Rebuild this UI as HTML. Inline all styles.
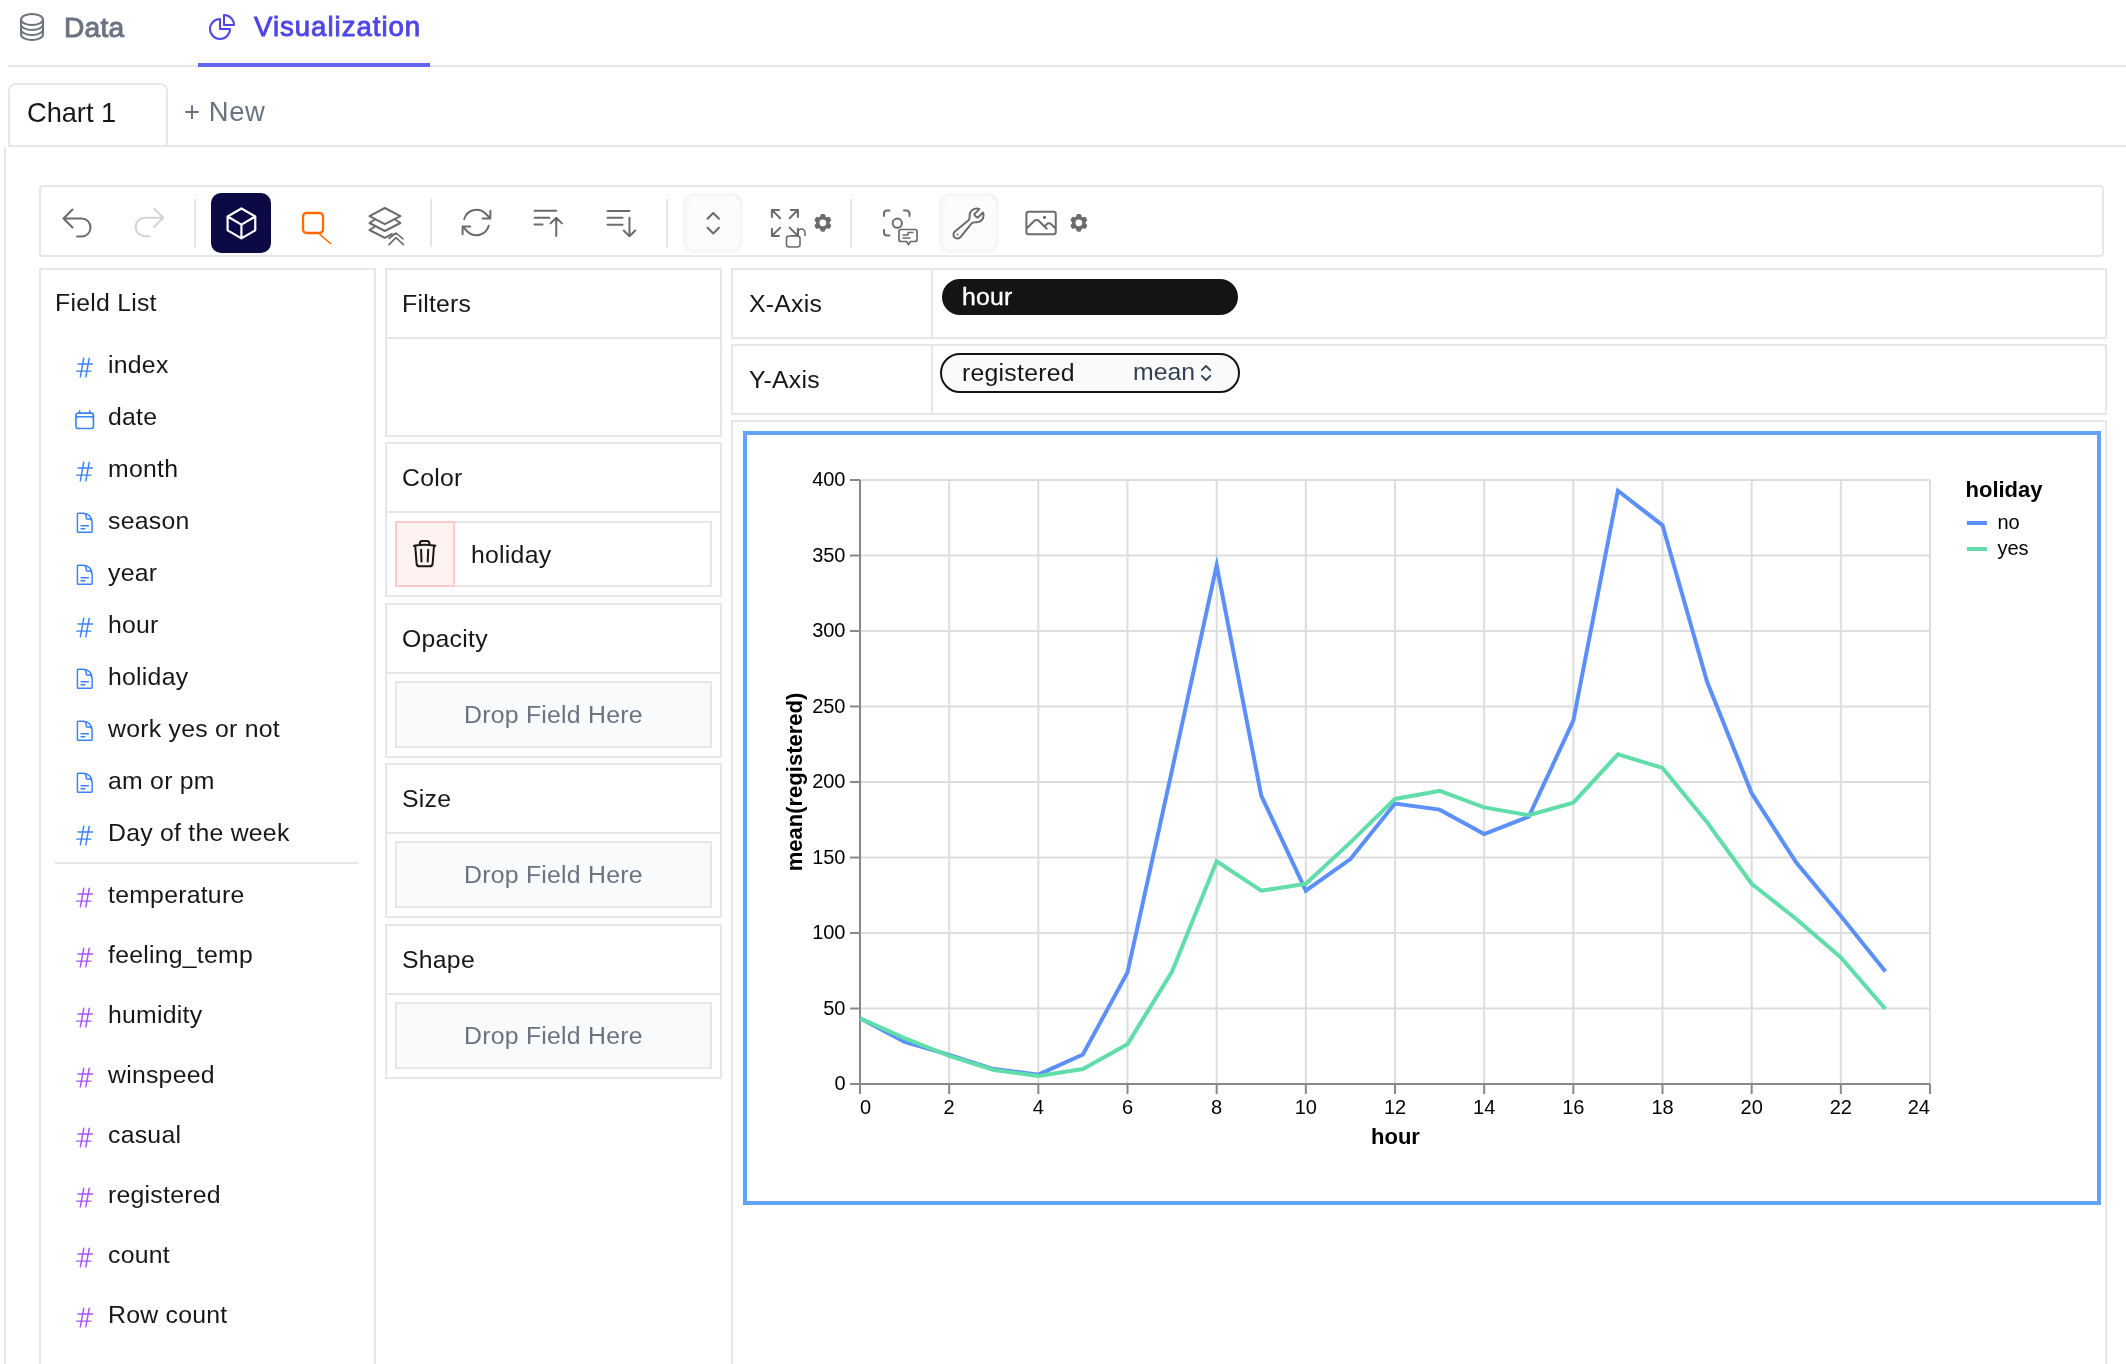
<!DOCTYPE html><html><head><meta charset="utf-8"><style>
html,body{margin:0;padding:0;background:#fff;}
#root{position:relative;width:2126px;height:1364px;overflow:hidden;background:#fff;font-family:"Liberation Sans", sans-serif;}
.t{position:absolute;white-space:nowrap;line-height:1;will-change:transform;}
.b{position:absolute;box-sizing:border-box;}
</style></head><body><div id="root">
<div class="b" style="left:8px;top:65px;width:2118px;height:2px;background:#e5e7eb;"></div>
<div class="b" style="left:198px;top:63px;width:232px;height:4px;background:#6366f1;"></div>
<svg class="b" style="left:16.00px;top:11.00px;" width="32.00" height="32.00" viewBox="0 0 24 24" fill="none" stroke="#6b7280" stroke-width="1.500" stroke-linecap="round" stroke-linejoin="round"><path d="M20.25 6.375c0 2.278-3.694 4.125-8.25 4.125S3.75 8.653 3.75 6.375m16.5 0c0-2.278-3.694-4.125-8.25-4.125S3.75 4.097 3.75 6.375m16.5 0v11.25c0 2.278-3.694 4.125-8.25 4.125s-8.25-1.847-8.25-4.125V6.375m16.5 0v3.75m-16.5-3.75v3.75m16.5 0v3.75C20.25 16.153 16.556 18 12 18s-8.25-1.847-8.25-4.125v-3.75m16.5 0c0 2.278-3.694 4.125-8.25 4.125s-8.25-1.847-8.25-4.125"/></svg>
<div class="t" style="left:64.0px;top:12.7px;font-size:28.2px;color:#6b7280;font-weight:normal;-webkit-text-stroke:0.95px #6b7280;letter-spacing:0.25px;">Data</div>
<svg class="b" style="left:205.95px;top:10.95px;" width="32.00" height="32.00" viewBox="0 0 24 24" fill="none" stroke="#4f46e5" stroke-width="1.500" stroke-linecap="round" stroke-linejoin="round"><path d="M10.5 6a7.5 7.5 0 107.5 7.5h-7.5V6z"/><path d="M13.5 10.5H21A7.5 7.5 0 0013.5 3v7.5z"/></svg>
<div class="t" style="left:254.0px;top:13.2px;font-size:27.6px;color:#4f46e5;font-weight:normal;-webkit-text-stroke:0.9px #4f46e5;letter-spacing:0.98px;">Visualization</div>
<div class="b" style="left:8px;top:145px;width:2118px;height:2px;background:#e5e7eb;"></div>
<div class="b" style="left:8px;top:83px;width:160px;height:64px;border:2px solid #e5e7eb;border-bottom:none;border-radius:8px 8px 0 0;"></div>
<div class="t" style="left:26.5px;top:99.4px;font-size:27.2px;color:#171717;font-weight:normal;">Chart 1</div>
<div class="t" style="left:184.0px;top:97.6px;font-size:27.4px;color:#6b7280;font-weight:normal;letter-spacing:0.6px;">+ New</div>
<div class="b" style="left:4px;top:147px;width:2px;height:1217px;background:#e5e7eb;"></div>
<div class="b" style="left:39px;top:185px;width:2065px;height:72px;border:2px solid #e5e7eb;border-radius:4px;"></div>
<div class="b" style="left:194px;top:199px;width:2px;height:48px;background:#e5e5e5;"></div>
<div class="b" style="left:430px;top:199px;width:2px;height:48px;background:#e5e5e5;"></div>
<div class="b" style="left:666px;top:199px;width:2px;height:48px;background:#e5e5e5;"></div>
<div class="b" style="left:850px;top:199px;width:2px;height:48px;background:#e5e5e5;"></div>
<div class="b" style="left:211px;top:193px;width:60px;height:60px;background:#0b0a45;border-radius:10px;"></div>
<div class="b" style="left:683px;top:193px;width:60px;height:60px;background:#fcfcfc;border-radius:12px;box-shadow:inset 0 0 7px rgba(0,0,0,0.07);"></div>
<div class="b" style="left:939px;top:193px;width:60px;height:60px;background:#fcfcfc;border-radius:12px;box-shadow:inset 0 0 7px rgba(0,0,0,0.07);"></div>
<svg class="b" style="left:58.67px;top:204.82px;" width="36.07" height="36.07" viewBox="0 0 24 24" fill="none" stroke="#6b6b6b" stroke-width="1.331" stroke-linecap="round" stroke-linejoin="round"><path d="M9 15L3 9m0 0l6-6M3 9h12a6 6 0 010 12h-3"/></svg>
<svg class="b" style="left:130.57px;top:204.42px;" width="36.87" height="36.87" viewBox="0 0 24 24" fill="none" stroke="#d4d4d4" stroke-width="1.302" stroke-linecap="round" stroke-linejoin="round"><path d="M15 15l6-6m0 0l-6-6m6 6H9a6 6 0 000 12h3"/></svg>
<svg class="b" style="left:222.56px;top:204.56px;" width="36.87" height="36.87" viewBox="0 0 24 24" fill="none" stroke="#fff" stroke-width="1.432" stroke-linecap="round" stroke-linejoin="round"><path d="M21 7.5l-9-5.25L3 7.5m18 0l-9 5.25m9-5.25v9l-9 5.25M3 7.5l9 5.25M3 7.5v9l9 5.25m0-9v9"/></svg>
<svg class="b" style="left:290px;top:200px" width="50" height="50" viewBox="290 200 50 50" fill="none" stroke="#ff6a00" stroke-linecap="round"><rect x="303" y="213" width="20" height="20" rx="3.5" stroke-width="2.3"/><path d="M320 234.5L330.5 243.5" stroke-width="1.6"/></svg>
<svg class="b" style="left:360px;top:200px" width="50" height="50" viewBox="360 200 50 50" fill="none" stroke="#6b6b6b" stroke-width="2" stroke-linejoin="round" stroke-linecap="round"><path d="M369.5 216.2L384.8 208L400.4 216.2L384.8 224.2Z"/><path d="M375 219.5L369.5 223L384.8 231L400.4 223L395 219.5"/><path d="M375 226.5L369.5 230L384.8 237.8L392 234"/><path d="M389 238.5L396 233L403 238.8M389 244.6L396 237.6L403.5 244.6" stroke-width="1.6"/></svg>
<svg class="b" style="left:458.42px;top:204.02px;" width="36.95" height="36.95" viewBox="0 0 24 24" fill="none" stroke="#6b6b6b" stroke-width="1.299" stroke-linecap="round" stroke-linejoin="round"><path d="M16.023 9.348h4.992v-.001M2.985 19.644v-4.992m0 0h4.992m-4.993 0l3.181 3.183a8.25 8.25 0 0013.803-3.7M4.031 9.865a8.25 8.25 0 0113.803-3.7l3.181 3.182m0-4.991v4.99"/></svg>
<svg class="b" style="left:530.49px;top:204.10px;" width="36.52" height="36.52" viewBox="0 0 24 24" fill="none" stroke="#6b6b6b" stroke-width="1.315" stroke-linecap="round" stroke-linejoin="round"><path d="M3 4.5h14.25M3 9h9.75M3 13.5h5.25m5.25-.75L17.25 9m0 0L21 12.75M17.25 9v12"/></svg>
<svg class="b" style="left:602.58px;top:203.92px;" width="36.85" height="36.85" viewBox="0 0 24 24" fill="none" stroke="#6b6b6b" stroke-width="1.303" stroke-linecap="round" stroke-linejoin="round"><path d="M3 4.5h14.25M3 9h9.75M3 13.5h9.75m4.5-4.5v12m0 0l-3.75-3.75M17.25 21L21 17.25"/></svg>
<svg class="b" style="left:694.60px;top:204.75px;" width="36.50" height="36.50" viewBox="0 0 24 24" fill="none" stroke="#6b6b6b" stroke-width="1.315" stroke-linecap="round" stroke-linejoin="round"><path d="M8.25 15L12 18.75 15.75 15m-7.5-6L12 5.25 15.75 9"/></svg>
<svg class="b" style="left:766.09px;top:204.09px;" width="37.82" height="37.82" viewBox="0 0 24 24" fill="none" stroke="#6b6b6b" stroke-width="1.269" stroke-linecap="round" stroke-linejoin="round"><path d="M3.75 3.75v4.5m0-4.5h4.5m-4.5 0L9 9M3.75 20.25v-4.5m0 4.5h4.5m-4.5 0L9 15M20.25 3.75h-4.5m4.5 0v4.5m0-4.5L15 9m5.25 11.25h-4.5m4.5 0v-4.5m0 4.5L15 15"/></svg>
<svg class="b" style="left:780px;top:222px" width="30" height="30" viewBox="780 222 30 30" fill="none" stroke="#6b6b6b" stroke-width="1.6" stroke-linecap="round"><rect x="786.5" y="236" width="13.5" height="11" rx="2.5" fill="#fff"/><path d="M798 236v-3.5a3.5 3.5 0 017 0v3"/></svg>
<svg class="b" style="left:812.16px;top:211.91px;" width="21.69" height="21.69" viewBox="0 0 24 24" fill="#6b6b6b" stroke="none" stroke-width="0.000" stroke-linecap="round" stroke-linejoin="round"><path fill-rule="evenodd" d="M11.078 2.25c-.917 0-1.699.663-1.85 1.567L9.05 4.889c-.02.12-.115.26-.297.348a7.493 7.493 0 00-.986.57c-.166.115-.334.126-.45.083L6.3 5.508a1.875 1.875 0 00-2.282.819l-.922 1.597a1.875 1.875 0 00.432 2.385l.84.692c.095.078.17.229.154.43a7.598 7.598 0 000 1.139c.015.2-.059.352-.153.43l-.841.692a1.875 1.875 0 00-.432 2.385l.922 1.597a1.875 1.875 0 002.282.818l1.019-.382c.115-.043.283-.031.45.082.312.214.641.405.985.57.182.088.277.228.297.35l.178 1.071c.151.904.933 1.567 1.85 1.567h1.844c.916 0 1.699-.663 1.85-1.567l.178-1.072c.02-.12.114-.26.297-.349.344-.165.673-.356.985-.57.167-.114.335-.125.45-.082l1.02.382a1.875 1.875 0 002.28-.819l.923-1.597a1.875 1.875 0 00-.432-2.385l-.84-.692c-.095-.078-.17-.229-.154-.43a7.614 7.614 0 000-1.139c-.016-.2.059-.352.153-.43l.84-.692c.708-.582.891-1.59.433-2.385l-.922-1.597a1.875 1.875 0 00-2.282-.818l-1.02.382c-.114.043-.282.031-.449-.083a7.49 7.49 0 00-.985-.57c-.183-.087-.277-.227-.297-.348l-.179-1.072a1.875 1.875 0 00-1.85-1.567h-1.843zM12 15.75a3.75 3.75 0 100-7.5 3.75 3.75 0 000 7.5z" clip-rule="evenodd"/></svg>
<svg class="b" style="left:875px;top:200px" width="50" height="50" viewBox="875 200 50 50" fill="none" stroke="#6b6b6b" stroke-width="2" stroke-linecap="round" stroke-linejoin="round"><path d="M884 216v-2.5a3 3 0 013-3h2.5M904 210.5h2.5a3 3 0 013 3v2.5M884 230v2.5a3 3 0 003 3h2.5"/><circle cx="897.3" cy="223.2" r="4.6"/><path d="M901 229.5h14a2 2 0 012 2v8a2 2 0 01-2 2h-4.5l-2 3-2-3H901a2 2 0 01-2-2v-8a2 2 0 012-2z" fill="#fff" stroke-width="1.7"/><path d="M903 235h5v-2.5h5M903 238h7" stroke-width="1.5"/></svg>
<svg class="b" style="left:950.01px;top:204.50px;" width="37.03" height="37.03" viewBox="0 0 24 24" fill="none" stroke="#6b6b6b" stroke-width="1.296" stroke-linecap="round" stroke-linejoin="round"><path d="M21.75 6.75a4.5 4.5 0 01-4.884 4.484c-1.076-.091-2.264.071-2.95.904l-7.152 8.684a2.548 2.548 0 11-3.586-3.586l8.684-7.152c.833-.686.995-1.874.904-2.95a4.5 4.5 0 016.336-4.486l-3.276 3.276a3.004 3.004 0 002.25 2.25l3.276-3.276c.256.565.398 1.192.398 1.852z"/><path d="M4.867 19.125h.008v.008h-.008v-.008z"/></svg>
<svg class="b" style="left:1022.67px;top:204.67px;" width="36.15" height="36.15" viewBox="0 0 24 24" fill="none" stroke="#6b6b6b" stroke-width="1.328" stroke-linecap="round" stroke-linejoin="round"><path d="M2.25 15.75l5.159-5.159a2.25 2.25 0 013.182 0l5.159 5.159m-1.5-1.5l1.409-1.409a2.25 2.25 0 013.182 0l2.909 2.909m-18 3.75h16.5a1.5 1.5 0 001.5-1.5V6a1.5 1.5 0 00-1.5-1.5H3.75A1.5 1.5 0 002.25 6v12a1.5 1.5 0 001.5 1.5zm10.5-11.25h.008v.008h-.008V8.25zm.375 0a.375.375 0 11-.75 0 .375.375 0 01.75 0z"/></svg>
<svg class="b" style="left:1067.66px;top:211.91px;" width="21.69" height="21.69" viewBox="0 0 24 24" fill="#6b6b6b" stroke="none" stroke-width="0.000" stroke-linecap="round" stroke-linejoin="round"><path fill-rule="evenodd" d="M11.078 2.25c-.917 0-1.699.663-1.85 1.567L9.05 4.889c-.02.12-.115.26-.297.348a7.493 7.493 0 00-.986.57c-.166.115-.334.126-.45.083L6.3 5.508a1.875 1.875 0 00-2.282.819l-.922 1.597a1.875 1.875 0 00.432 2.385l.84.692c.095.078.17.229.154.43a7.598 7.598 0 000 1.139c.015.2-.059.352-.153.43l-.841.692a1.875 1.875 0 00-.432 2.385l.922 1.597a1.875 1.875 0 002.282.818l1.019-.382c.115-.043.283-.031.45.082.312.214.641.405.985.57.182.088.277.228.297.35l.178 1.071c.151.904.933 1.567 1.85 1.567h1.844c.916 0 1.699-.663 1.85-1.567l.178-1.072c.02-.12.114-.26.297-.349.344-.165.673-.356.985-.57.167-.114.335-.125.45-.082l1.02.382a1.875 1.875 0 002.28-.819l.923-1.597a1.875 1.875 0 00-.432-2.385l-.84-.692c-.095-.078-.17-.229-.154-.43a7.614 7.614 0 000-1.139c-.016-.2.059-.352.153-.43l.84-.692c.708-.582.891-1.59.433-2.385l-.922-1.597a1.875 1.875 0 00-2.282-.818l-1.02.382c-.114.043-.282.031-.449-.083a7.49 7.49 0 00-.985-.57c-.183-.087-.277-.227-.297-.348l-.179-1.072a1.875 1.875 0 00-1.85-1.567h-1.843zM12 15.75a3.75 3.75 0 100-7.5 3.75 3.75 0 000 7.5z" clip-rule="evenodd"/></svg>
<div class="b" style="left:39px;top:268px;width:337px;height:1132px;border:2px solid #e5e7eb;border-radius:0px;"></div>
<div class="t" style="left:54.5px;top:291.1px;font-size:24.8px;color:#171717;font-weight:normal;letter-spacing:0.25px;">Field List</div>
<svg class="b" style="left:72.84px;top:355.84px;" width="23.03" height="23.03" viewBox="0 0 24 24" fill="none" stroke="#3b82f6" stroke-width="1.511" stroke-linecap="round" stroke-linejoin="round"><path d="M5.25 8.25h15m-16.5 7.5h15m-1.8-13.5l-3.6 19.5m-2.1-19.5l-3.6 19.5"/></svg>
<div class="t" style="left:108.0px;top:352.8px;font-size:24.8px;color:#171717;font-weight:normal;letter-spacing:0.25px;">index</div>
<svg class="b" style="left:73.25px;top:407.60px;" width="23.40" height="23.40" viewBox="0 0 24 24" fill="none" stroke="#3b82f6" stroke-width="1.641" stroke-linecap="round" stroke-linejoin="round"><path d="M6.75 3v2.25M17.25 3v2.25M3 18.75V7.5a2.25 2.25 0 012.25-2.25h13.5A2.25 2.25 0 0121 7.5v11.25m-18 0A2.25 2.25 0 005.25 21h13.5A2.25 2.25 0 0021 18.75m-18 0v-7.5A2.25 2.25 0 015.25 9h13.5A2.25 2.25 0 0121 11.25v7.5"/></svg>
<div class="t" style="left:108.0px;top:404.8px;font-size:24.8px;color:#171717;font-weight:normal;letter-spacing:0.25px;">date</div>
<svg class="b" style="left:72.84px;top:459.84px;" width="23.03" height="23.03" viewBox="0 0 24 24" fill="none" stroke="#3b82f6" stroke-width="1.511" stroke-linecap="round" stroke-linejoin="round"><path d="M5.25 8.25h15m-16.5 7.5h15m-1.8-13.5l-3.6 19.5m-2.1-19.5l-3.6 19.5"/></svg>
<div class="t" style="left:108.0px;top:456.8px;font-size:24.8px;color:#171717;font-weight:normal;letter-spacing:0.25px;">month</div>
<svg class="b" style="left:73.23px;top:511.18px;" width="23.54" height="23.54" viewBox="0 0 24 24" fill="none" stroke="#3b82f6" stroke-width="1.529" stroke-linecap="round" stroke-linejoin="round"><path d="M19.5 14.25v-2.625a3.375 3.375 0 00-3.375-3.375h-1.5A1.125 1.125 0 0113.5 7.125v-1.5a3.375 3.375 0 00-3.375-3.375H8.25m0 12.75h7.5m-7.5 3H12M10.5 2.25H5.625c-.621 0-1.125.504-1.125 1.125v17.25c0 .621.504 1.125 1.125 1.125h12.75c.621 0 1.125-.504 1.125-1.125V11.25a9 9 0 00-9-9z"/></svg>
<div class="t" style="left:108.0px;top:508.8px;font-size:24.8px;color:#171717;font-weight:normal;letter-spacing:0.25px;">season</div>
<svg class="b" style="left:73.23px;top:563.18px;" width="23.54" height="23.54" viewBox="0 0 24 24" fill="none" stroke="#3b82f6" stroke-width="1.529" stroke-linecap="round" stroke-linejoin="round"><path d="M19.5 14.25v-2.625a3.375 3.375 0 00-3.375-3.375h-1.5A1.125 1.125 0 0113.5 7.125v-1.5a3.375 3.375 0 00-3.375-3.375H8.25m0 12.75h7.5m-7.5 3H12M10.5 2.25H5.625c-.621 0-1.125.504-1.125 1.125v17.25c0 .621.504 1.125 1.125 1.125h12.75c.621 0 1.125-.504 1.125-1.125V11.25a9 9 0 00-9-9z"/></svg>
<div class="t" style="left:108.0px;top:560.8px;font-size:24.8px;color:#171717;font-weight:normal;letter-spacing:0.25px;">year</div>
<svg class="b" style="left:72.84px;top:615.84px;" width="23.03" height="23.03" viewBox="0 0 24 24" fill="none" stroke="#3b82f6" stroke-width="1.511" stroke-linecap="round" stroke-linejoin="round"><path d="M5.25 8.25h15m-16.5 7.5h15m-1.8-13.5l-3.6 19.5m-2.1-19.5l-3.6 19.5"/></svg>
<div class="t" style="left:108.0px;top:612.8px;font-size:24.8px;color:#171717;font-weight:normal;letter-spacing:0.25px;">hour</div>
<svg class="b" style="left:73.23px;top:667.18px;" width="23.54" height="23.54" viewBox="0 0 24 24" fill="none" stroke="#3b82f6" stroke-width="1.529" stroke-linecap="round" stroke-linejoin="round"><path d="M19.5 14.25v-2.625a3.375 3.375 0 00-3.375-3.375h-1.5A1.125 1.125 0 0113.5 7.125v-1.5a3.375 3.375 0 00-3.375-3.375H8.25m0 12.75h7.5m-7.5 3H12M10.5 2.25H5.625c-.621 0-1.125.504-1.125 1.125v17.25c0 .621.504 1.125 1.125 1.125h12.75c.621 0 1.125-.504 1.125-1.125V11.25a9 9 0 00-9-9z"/></svg>
<div class="t" style="left:108.0px;top:664.8px;font-size:24.8px;color:#171717;font-weight:normal;letter-spacing:0.25px;">holiday</div>
<svg class="b" style="left:73.23px;top:719.18px;" width="23.54" height="23.54" viewBox="0 0 24 24" fill="none" stroke="#3b82f6" stroke-width="1.529" stroke-linecap="round" stroke-linejoin="round"><path d="M19.5 14.25v-2.625a3.375 3.375 0 00-3.375-3.375h-1.5A1.125 1.125 0 0113.5 7.125v-1.5a3.375 3.375 0 00-3.375-3.375H8.25m0 12.75h7.5m-7.5 3H12M10.5 2.25H5.625c-.621 0-1.125.504-1.125 1.125v17.25c0 .621.504 1.125 1.125 1.125h12.75c.621 0 1.125-.504 1.125-1.125V11.25a9 9 0 00-9-9z"/></svg>
<div class="t" style="left:108.0px;top:716.8px;font-size:24.8px;color:#171717;font-weight:normal;letter-spacing:0.25px;">work yes or not</div>
<svg class="b" style="left:73.23px;top:771.18px;" width="23.54" height="23.54" viewBox="0 0 24 24" fill="none" stroke="#3b82f6" stroke-width="1.529" stroke-linecap="round" stroke-linejoin="round"><path d="M19.5 14.25v-2.625a3.375 3.375 0 00-3.375-3.375h-1.5A1.125 1.125 0 0113.5 7.125v-1.5a3.375 3.375 0 00-3.375-3.375H8.25m0 12.75h7.5m-7.5 3H12M10.5 2.25H5.625c-.621 0-1.125.504-1.125 1.125v17.25c0 .621.504 1.125 1.125 1.125h12.75c.621 0 1.125-.504 1.125-1.125V11.25a9 9 0 00-9-9z"/></svg>
<div class="t" style="left:108.0px;top:768.8px;font-size:24.8px;color:#171717;font-weight:normal;letter-spacing:0.25px;">am or pm</div>
<svg class="b" style="left:72.84px;top:823.84px;" width="23.03" height="23.03" viewBox="0 0 24 24" fill="none" stroke="#3b82f6" stroke-width="1.511" stroke-linecap="round" stroke-linejoin="round"><path d="M5.25 8.25h15m-16.5 7.5h15m-1.8-13.5l-3.6 19.5m-2.1-19.5l-3.6 19.5"/></svg>
<div class="t" style="left:108.0px;top:820.8px;font-size:24.8px;color:#171717;font-weight:normal;letter-spacing:0.25px;">Day of the week</div>
<div class="b" style="left:55px;top:862px;width:304px;height:2px;background:#e5e7eb;"></div>
<svg class="b" style="left:72.84px;top:885.84px;" width="23.03" height="23.03" viewBox="0 0 24 24" fill="none" stroke="#a855f7" stroke-width="1.511" stroke-linecap="round" stroke-linejoin="round"><path d="M5.25 8.25h15m-16.5 7.5h15m-1.8-13.5l-3.6 19.5m-2.1-19.5l-3.6 19.5"/></svg>
<div class="t" style="left:108.0px;top:882.8px;font-size:24.8px;color:#171717;font-weight:normal;letter-spacing:0.25px;">temperature</div>
<svg class="b" style="left:72.84px;top:945.84px;" width="23.03" height="23.03" viewBox="0 0 24 24" fill="none" stroke="#a855f7" stroke-width="1.511" stroke-linecap="round" stroke-linejoin="round"><path d="M5.25 8.25h15m-16.5 7.5h15m-1.8-13.5l-3.6 19.5m-2.1-19.5l-3.6 19.5"/></svg>
<div class="t" style="left:108.0px;top:942.8px;font-size:24.8px;color:#171717;font-weight:normal;letter-spacing:0.25px;">feeling_temp</div>
<svg class="b" style="left:72.84px;top:1005.84px;" width="23.03" height="23.03" viewBox="0 0 24 24" fill="none" stroke="#a855f7" stroke-width="1.511" stroke-linecap="round" stroke-linejoin="round"><path d="M5.25 8.25h15m-16.5 7.5h15m-1.8-13.5l-3.6 19.5m-2.1-19.5l-3.6 19.5"/></svg>
<div class="t" style="left:108.0px;top:1002.8px;font-size:24.8px;color:#171717;font-weight:normal;letter-spacing:0.25px;">humidity</div>
<svg class="b" style="left:72.84px;top:1065.84px;" width="23.03" height="23.03" viewBox="0 0 24 24" fill="none" stroke="#a855f7" stroke-width="1.511" stroke-linecap="round" stroke-linejoin="round"><path d="M5.25 8.25h15m-16.5 7.5h15m-1.8-13.5l-3.6 19.5m-2.1-19.5l-3.6 19.5"/></svg>
<div class="t" style="left:108.0px;top:1062.8px;font-size:24.8px;color:#171717;font-weight:normal;letter-spacing:0.25px;">winspeed</div>
<svg class="b" style="left:72.84px;top:1125.84px;" width="23.03" height="23.03" viewBox="0 0 24 24" fill="none" stroke="#a855f7" stroke-width="1.511" stroke-linecap="round" stroke-linejoin="round"><path d="M5.25 8.25h15m-16.5 7.5h15m-1.8-13.5l-3.6 19.5m-2.1-19.5l-3.6 19.5"/></svg>
<div class="t" style="left:108.0px;top:1122.8px;font-size:24.8px;color:#171717;font-weight:normal;letter-spacing:0.25px;">casual</div>
<svg class="b" style="left:72.84px;top:1185.84px;" width="23.03" height="23.03" viewBox="0 0 24 24" fill="none" stroke="#a855f7" stroke-width="1.511" stroke-linecap="round" stroke-linejoin="round"><path d="M5.25 8.25h15m-16.5 7.5h15m-1.8-13.5l-3.6 19.5m-2.1-19.5l-3.6 19.5"/></svg>
<div class="t" style="left:108.0px;top:1182.8px;font-size:24.8px;color:#171717;font-weight:normal;letter-spacing:0.25px;">registered</div>
<svg class="b" style="left:72.84px;top:1245.84px;" width="23.03" height="23.03" viewBox="0 0 24 24" fill="none" stroke="#a855f7" stroke-width="1.511" stroke-linecap="round" stroke-linejoin="round"><path d="M5.25 8.25h15m-16.5 7.5h15m-1.8-13.5l-3.6 19.5m-2.1-19.5l-3.6 19.5"/></svg>
<div class="t" style="left:108.0px;top:1242.8px;font-size:24.8px;color:#171717;font-weight:normal;letter-spacing:0.25px;">count</div>
<svg class="b" style="left:72.84px;top:1305.84px;" width="23.03" height="23.03" viewBox="0 0 24 24" fill="none" stroke="#a855f7" stroke-width="1.511" stroke-linecap="round" stroke-linejoin="round"><path d="M5.25 8.25h15m-16.5 7.5h15m-1.8-13.5l-3.6 19.5m-2.1-19.5l-3.6 19.5"/></svg>
<div class="t" style="left:108.0px;top:1302.8px;font-size:24.8px;color:#171717;font-weight:normal;letter-spacing:0.25px;">Row count</div>
<div class="b" style="left:385px;top:268px;width:337px;height:169px;border:2px solid #e5e7eb;border-radius:0px;"></div>
<div class="b" style="left:387px;top:337px;width:333px;height:2px;background:#e5e7eb;"></div>
<div class="t" style="left:401.5px;top:291.6px;font-size:24.8px;color:#171717;font-weight:normal;letter-spacing:0.25px;">Filters</div>
<div class="b" style="left:385px;top:442px;width:337px;height:155px;border:2px solid #e5e7eb;border-radius:0px;"></div>
<div class="b" style="left:387px;top:511px;width:333px;height:2px;background:#e5e7eb;"></div>
<div class="t" style="left:401.5px;top:466.3px;font-size:24.8px;color:#171717;font-weight:normal;letter-spacing:0.25px;">Color</div>
<div class="b" style="left:395px;top:521px;width:317px;height:66px;border:2px solid #e5e7eb;border-radius:0px;"></div>
<div class="b" style="left:395px;top:521px;width:60px;height:66px;border:2px solid #fecaca;border-radius:0px;background:#fef2f2;"></div>
<svg class="b" style="left:409.43px;top:538.38px;" width="31.24" height="31.24" viewBox="0 0 24 24" fill="none" stroke="#171717" stroke-width="1.536" stroke-linecap="round" stroke-linejoin="round"><path d="M14.74 9l-.346 9m-4.788 0L9.26 9m9.968-3.21c.342.052.682.107 1.022.166m-1.022-.165L18.16 19.673a2.25 2.25 0 01-2.244 2.077H8.084a2.25 2.25 0 01-2.244-2.077L4.772 5.79m14.456 0a48.108 48.108 0 00-3.478-.397m-12 .562c.34-.059.68-.114 1.022-.165m0 0a48.11 48.11 0 013.478-.397m7.5 0v-.916c0-1.18-.91-2.164-2.09-2.201a51.964 51.964 0 00-3.32 0c-1.18.037-2.09 1.022-2.09 2.201v.916m7.5 0a48.667 48.667 0 00-7.5 0"/></svg>
<div class="t" style="left:471.3px;top:542.8px;font-size:24.8px;color:#171717;font-weight:normal;letter-spacing:0.25px;">holiday</div>
<div class="b" style="left:385px;top:603px;width:337px;height:155px;border:2px solid #e5e7eb;border-radius:0px;"></div>
<div class="b" style="left:387px;top:672px;width:333px;height:2px;background:#e5e7eb;"></div>
<div class="t" style="left:401.5px;top:627.3px;font-size:24.8px;color:#171717;font-weight:normal;letter-spacing:0.25px;">Opacity</div>
<div class="b" style="left:395px;top:681px;width:317px;height:67px;border:2px solid #e5e7eb;border-radius:0px;background:#f9fafb;"></div>
<div class="t" style="left:464.3px;top:703.3px;font-size:24.8px;color:#6b7280;font-weight:normal;letter-spacing:0.25px;">Drop Field Here</div>
<div class="b" style="left:385px;top:763px;width:337px;height:155px;border:2px solid #e5e7eb;border-radius:0px;"></div>
<div class="b" style="left:387px;top:832px;width:333px;height:2px;background:#e5e7eb;"></div>
<div class="t" style="left:401.5px;top:787.3px;font-size:24.8px;color:#171717;font-weight:normal;letter-spacing:0.25px;">Size</div>
<div class="b" style="left:395px;top:841px;width:317px;height:67px;border:2px solid #e5e7eb;border-radius:0px;background:#f9fafb;"></div>
<div class="t" style="left:464.3px;top:863.3px;font-size:24.8px;color:#6b7280;font-weight:normal;letter-spacing:0.25px;">Drop Field Here</div>
<div class="b" style="left:385px;top:924px;width:337px;height:155px;border:2px solid #e5e7eb;border-radius:0px;"></div>
<div class="b" style="left:387px;top:993px;width:333px;height:2px;background:#e5e7eb;"></div>
<div class="t" style="left:401.5px;top:948.3px;font-size:24.8px;color:#171717;font-weight:normal;letter-spacing:0.25px;">Shape</div>
<div class="b" style="left:395px;top:1002px;width:317px;height:67px;border:2px solid #e5e7eb;border-radius:0px;background:#f9fafb;"></div>
<div class="t" style="left:464.3px;top:1024.3px;font-size:24.8px;color:#6b7280;font-weight:normal;letter-spacing:0.25px;">Drop Field Here</div>
<div class="b" style="left:731px;top:268px;width:1376px;height:71px;border:2px solid #e5e7eb;border-radius:0px;"></div>
<div class="b" style="left:931px;top:270px;width:2px;height:67px;background:#e5e7eb;"></div>
<div class="t" style="left:748.5px;top:292.0px;font-size:24.8px;color:#171717;font-weight:normal;letter-spacing:0.25px;">X-Axis</div>
<div class="b" style="left:731px;top:344px;width:1376px;height:71px;border:2px solid #e5e7eb;border-radius:0px;"></div>
<div class="b" style="left:931px;top:346px;width:2px;height:67px;background:#e5e7eb;"></div>
<div class="t" style="left:748.5px;top:367.8px;font-size:24.8px;color:#171717;font-weight:normal;letter-spacing:0.25px;">Y-Axis</div>
<div class="b" style="left:942px;top:279px;width:296px;height:36px;background:#141414;border-radius:18px;"></div>
<div class="t" style="left:962.3px;top:285.2px;font-size:24.8px;color:#fff;font-weight:normal;-webkit-text-stroke:0.35px #fff;letter-spacing:0.25px;">hour</div>
<div class="b" style="left:940px;top:353px;width:300px;height:40px;border:2px solid #141414;border-radius:20px;background:#fafafa;"></div>
<div class="t" style="left:962.3px;top:360.6px;font-size:24.8px;color:#171717;font-weight:normal;letter-spacing:0.25px;">registered</div>
<div class="t" style="left:1133.0px;top:360.4px;font-size:24.8px;color:#334155;font-weight:normal;letter-spacing:0px;">mean</div>
<svg class="b" style="left:1195px;top:360px" width="24" height="26" viewBox="1195 360 24 26" fill="none" stroke="#334155" stroke-width="1.8" stroke-linecap="round" stroke-linejoin="round"><path d="M1201.8 370.2L1206 366L1210.3 370.2M1201.8 375.8L1206 380L1210.3 375.8"/></svg>
<div class="b" style="left:731px;top:420px;width:1376px;height:980px;border:2px solid #e5e7eb;border-radius:0px;"></div>
<div class="b" style="left:743px;top:431px;width:1358px;height:774px;border:4px solid #60a5fa;border-radius:0px;"></div>
<svg class="b" style="left:0;top:0;will-change:transform" width="2126" height="1364" viewBox="0 0 2126 1364" font-family='"Liberation Sans", sans-serif'><line x1="860.00" y1="480" x2="860.00" y2="1084" stroke="#ddd" stroke-width="2"/><line x1="949.17" y1="480" x2="949.17" y2="1084" stroke="#ddd" stroke-width="2"/><line x1="1038.33" y1="480" x2="1038.33" y2="1084" stroke="#ddd" stroke-width="2"/><line x1="1127.50" y1="480" x2="1127.50" y2="1084" stroke="#ddd" stroke-width="2"/><line x1="1216.67" y1="480" x2="1216.67" y2="1084" stroke="#ddd" stroke-width="2"/><line x1="1305.83" y1="480" x2="1305.83" y2="1084" stroke="#ddd" stroke-width="2"/><line x1="1395.00" y1="480" x2="1395.00" y2="1084" stroke="#ddd" stroke-width="2"/><line x1="1484.17" y1="480" x2="1484.17" y2="1084" stroke="#ddd" stroke-width="2"/><line x1="1573.33" y1="480" x2="1573.33" y2="1084" stroke="#ddd" stroke-width="2"/><line x1="1662.50" y1="480" x2="1662.50" y2="1084" stroke="#ddd" stroke-width="2"/><line x1="1751.67" y1="480" x2="1751.67" y2="1084" stroke="#ddd" stroke-width="2"/><line x1="1840.83" y1="480" x2="1840.83" y2="1084" stroke="#ddd" stroke-width="2"/><line x1="1930.00" y1="480" x2="1930.00" y2="1084" stroke="#ddd" stroke-width="2"/><line x1="860" y1="1084.00" x2="1930" y2="1084.00" stroke="#ddd" stroke-width="2"/><line x1="860" y1="1008.50" x2="1930" y2="1008.50" stroke="#ddd" stroke-width="2"/><line x1="860" y1="933.00" x2="1930" y2="933.00" stroke="#ddd" stroke-width="2"/><line x1="860" y1="857.50" x2="1930" y2="857.50" stroke="#ddd" stroke-width="2"/><line x1="860" y1="782.00" x2="1930" y2="782.00" stroke="#ddd" stroke-width="2"/><line x1="860" y1="706.50" x2="1930" y2="706.50" stroke="#ddd" stroke-width="2"/><line x1="860" y1="631.00" x2="1930" y2="631.00" stroke="#ddd" stroke-width="2"/><line x1="860" y1="555.50" x2="1930" y2="555.50" stroke="#ddd" stroke-width="2"/><line x1="860" y1="480.00" x2="1930" y2="480.00" stroke="#ddd" stroke-width="2"/><line x1="860" y1="1084" x2="1930" y2="1084" stroke="#888" stroke-width="2"/><line x1="860" y1="480" x2="860" y2="1084" stroke="#888" stroke-width="2"/><line x1="860.00" y1="1084" x2="860.00" y2="1094" stroke="#888" stroke-width="2"/><text x="860.00" y="1113.8" font-size="20" text-anchor="start" fill="#000">0</text><line x1="949.17" y1="1084" x2="949.17" y2="1094" stroke="#888" stroke-width="2"/><text x="949.17" y="1113.8" font-size="20" text-anchor="middle" fill="#000">2</text><line x1="1038.33" y1="1084" x2="1038.33" y2="1094" stroke="#888" stroke-width="2"/><text x="1038.33" y="1113.8" font-size="20" text-anchor="middle" fill="#000">4</text><line x1="1127.50" y1="1084" x2="1127.50" y2="1094" stroke="#888" stroke-width="2"/><text x="1127.50" y="1113.8" font-size="20" text-anchor="middle" fill="#000">6</text><line x1="1216.67" y1="1084" x2="1216.67" y2="1094" stroke="#888" stroke-width="2"/><text x="1216.67" y="1113.8" font-size="20" text-anchor="middle" fill="#000">8</text><line x1="1305.83" y1="1084" x2="1305.83" y2="1094" stroke="#888" stroke-width="2"/><text x="1305.83" y="1113.8" font-size="20" text-anchor="middle" fill="#000">10</text><line x1="1395.00" y1="1084" x2="1395.00" y2="1094" stroke="#888" stroke-width="2"/><text x="1395.00" y="1113.8" font-size="20" text-anchor="middle" fill="#000">12</text><line x1="1484.17" y1="1084" x2="1484.17" y2="1094" stroke="#888" stroke-width="2"/><text x="1484.17" y="1113.8" font-size="20" text-anchor="middle" fill="#000">14</text><line x1="1573.33" y1="1084" x2="1573.33" y2="1094" stroke="#888" stroke-width="2"/><text x="1573.33" y="1113.8" font-size="20" text-anchor="middle" fill="#000">16</text><line x1="1662.50" y1="1084" x2="1662.50" y2="1094" stroke="#888" stroke-width="2"/><text x="1662.50" y="1113.8" font-size="20" text-anchor="middle" fill="#000">18</text><line x1="1751.67" y1="1084" x2="1751.67" y2="1094" stroke="#888" stroke-width="2"/><text x="1751.67" y="1113.8" font-size="20" text-anchor="middle" fill="#000">20</text><line x1="1840.83" y1="1084" x2="1840.83" y2="1094" stroke="#888" stroke-width="2"/><text x="1840.83" y="1113.8" font-size="20" text-anchor="middle" fill="#000">22</text><line x1="1930.00" y1="1084" x2="1930.00" y2="1094" stroke="#888" stroke-width="2"/><text x="1930.00" y="1113.8" font-size="20" text-anchor="end" fill="#000">24</text><line x1="850" y1="1084.00" x2="860" y2="1084.00" stroke="#888" stroke-width="2"/><text x="845.5" y="1090.20" font-size="20" text-anchor="end" fill="#000">0</text><line x1="850" y1="1008.50" x2="860" y2="1008.50" stroke="#888" stroke-width="2"/><text x="845.5" y="1014.70" font-size="20" text-anchor="end" fill="#000">50</text><line x1="850" y1="933.00" x2="860" y2="933.00" stroke="#888" stroke-width="2"/><text x="845.5" y="939.20" font-size="20" text-anchor="end" fill="#000">100</text><line x1="850" y1="857.50" x2="860" y2="857.50" stroke="#888" stroke-width="2"/><text x="845.5" y="863.70" font-size="20" text-anchor="end" fill="#000">150</text><line x1="850" y1="782.00" x2="860" y2="782.00" stroke="#888" stroke-width="2"/><text x="845.5" y="788.20" font-size="20" text-anchor="end" fill="#000">200</text><line x1="850" y1="706.50" x2="860" y2="706.50" stroke="#888" stroke-width="2"/><text x="845.5" y="712.70" font-size="20" text-anchor="end" fill="#000">250</text><line x1="850" y1="631.00" x2="860" y2="631.00" stroke="#888" stroke-width="2"/><text x="845.5" y="637.20" font-size="20" text-anchor="end" fill="#000">300</text><line x1="850" y1="555.50" x2="860" y2="555.50" stroke="#888" stroke-width="2"/><text x="845.5" y="561.70" font-size="20" text-anchor="end" fill="#000">350</text><line x1="850" y1="480.00" x2="860" y2="480.00" stroke="#888" stroke-width="2"/><text x="845.5" y="486.20" font-size="20" text-anchor="end" fill="#000">400</text><text x="1395.5" y="1143.9" font-size="22" font-weight="bold" text-anchor="middle" fill="#000">hour</text><text transform="translate(801.5 782) rotate(-90)" font-size="22" font-weight="bold" text-anchor="middle" fill="#000">mean(registered)</text><polyline points="860.00,1018.32 904.58,1041.87 949.17,1054.86 993.75,1069.05 1038.33,1074.64 1082.92,1054.56 1127.50,972.41 1172.08,769.92 1216.67,565.32 1261.25,795.59 1305.83,890.72 1350.42,859.01 1395.00,803.59 1439.58,809.63 1484.17,834.10 1528.75,816.73 1573.33,720.54 1617.92,490.72 1662.50,525.30 1707.08,681.74 1751.67,793.33 1796.25,862.63 1840.83,916.09 1885.42,971.50" fill="none" stroke="#5b8ff9" stroke-width="4" stroke-linejoin="miter" stroke-miterlimit="10"/><polyline points="860.00,1018.32 904.58,1038.10 949.17,1055.91 993.75,1069.96 1038.33,1076.00 1082.92,1069.05 1127.50,1044.14 1172.08,971.50 1216.67,861.27 1261.25,890.72 1305.83,883.77 1350.42,842.40 1395.00,798.91 1439.58,790.91 1484.17,807.37 1528.75,815.22 1573.33,802.69 1617.92,754.37 1662.50,767.96 1707.08,822.32 1751.67,883.77 1796.25,918.96 1840.83,957.46 1885.42,1008.95" fill="none" stroke="#61ddaa" stroke-width="4" stroke-linejoin="miter" stroke-miterlimit="10"/><text x="1965.5" y="497" font-size="22" font-weight="bold" fill="#000">holiday</text><line x1="1967" y1="523" x2="1987" y2="523" stroke="#5b8ff9" stroke-width="4"/><line x1="1967" y1="549" x2="1987" y2="549" stroke="#61ddaa" stroke-width="4"/><text x="1997.5" y="528.6" font-size="20" fill="#000">no</text><text x="1997.5" y="555" font-size="20" fill="#000">yes</text></svg>
</div></body></html>
